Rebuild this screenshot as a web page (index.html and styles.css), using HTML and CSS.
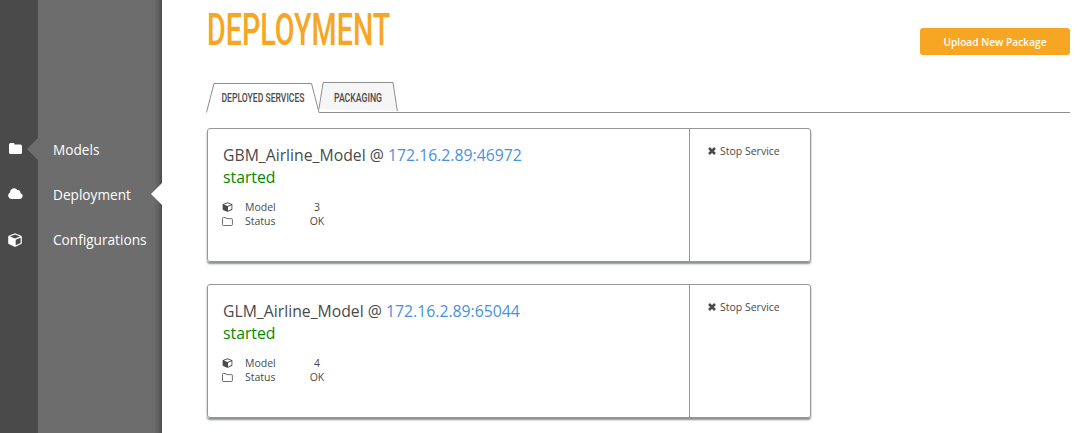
FILE: index.html
```html
<!DOCTYPE html>
<html lang="en">
<head>
<meta charset="utf-8">
<title>Deployment</title>
<link rel="stylesheet" href="styles.css">
</head>
<body>
<svg class="defs" width="0" height="0" aria-hidden="true">
  <symbol id="folder" viewBox="0 0 13 11"><path d="M0 1.6Q0 0 1.6 0H4Q5.6 0 5.6 1.4H11.2Q13 1.4 13 3V9.4Q13 11 11.4 11H1.6Q0 11 0 9.4Z"/></symbol>
  <symbol id="cloud" viewBox="0 0 15 11"><path d="M3.4 11A3.4 3.4 0 0 1 2 4.6A4.1 4.1 0 0 1 9.4 2A2.4 2.4 0 0 1 12.3 5A3.05 3.05 0 0 1 11.8 11Z"/></symbol>
  <symbol id="cube" viewBox="0 0 14 14"><path fill-rule="evenodd" d="M7 .3L13.2 2.7Q13.8 3 13.8 3.6V10.2Q13.8 10.8 13.2 11.1L7.5 13.7Q7 13.9 6.5 13.7L.8 11.1Q.2 10.8 .2 10.2V3.6Q.2 3 .8 2.7ZM7 1.6L2 3.6L7 5.6L12 3.6ZM7.7 6.7V12.2L12.6 9.9V4.7Z"/></symbol>
  <symbol id="folder-line" viewBox="0 0 11 9"><path fill="none" stroke="currentColor" stroke-width=".8" d="M.5 1.5Q.5.5 1.5.5H3.4Q4.3.5 4.4 1.6H9.3Q10.4 1.6 10.4 2.6V7.5Q10.4 8.5 9.4 8.5H1.5Q.5 8.5.5 7.5Z"/></symbol>
  <symbol id="cross" viewBox="0 0 8 8"><path fill="none" stroke="currentColor" stroke-width="2.5" d="M1 1L7 7M7 1L1 7"/></symbol>
</svg>
<div class="app">
  <nav class="sidebar">
    <a class="item parent"><span class="rail"><svg class="i-folder"><use href="#folder"/></svg></span><span class="label">Models</span></a>
    <a class="item active"><span class="rail"><svg class="i-cloud"><use href="#cloud"/></svg></span><span class="label">Deployment</span></a>
    <a class="item"><span class="rail"><svg class="i-cube"><use href="#cube"/></svg></span><span class="label">Configurations</span></a>
  </nav>
  <main class="main">
    <header class="header">
      <svg class="title" width="190" height="56"><text transform="translate(1 45) scale(.64 1)" textLength="286.5" lengthAdjust="spacingAndGlyphs">DEPLOYMENT</text></svg>
      <button class="upload">Upload New Package</button>
    </header>
    <svg class="tabs" width="864" height="34">
      <path class="tab-off" d="M112.8 29.5L117.2 2.5H187L191.3 31"/>
      <path class="rule" d="M113 32.5H864"/>
      <path class="tab-on" d="M.5 32.5L8 3.5H105.5L113 32.5"/>
      <text transform="translate(15.5 22) scale(.66 1)" textLength="125.8" lengthAdjust="spacingAndGlyphs">DEPLOYED SERVICES</text>
      <text transform="translate(128 22) scale(.68 1)" textLength="70.6" lengthAdjust="spacingAndGlyphs">PACKAGING</text>
    </svg>
    <section class="card">
      <div class="info">
        <div class="name">GBM_Airline_Model @ <a>172.16.2.89:46972</a></div>
        <div class="state">started</div>
        <div class="row"><svg class="i-small"><use href="#cube"/></svg><span>Model</span><b>3</b></div>
        <div class="row"><svg class="i-small i-line"><use href="#folder-line"/></svg><span>Status</span><b>OK</b></div>
      </div>
      <div class="actions"><svg class="i-cross"><use href="#cross"/></svg>Stop Service</div>
    </section>
    <section class="card">
      <div class="info">
        <div class="name">GLM_Airline_Model @ <a>172.16.2.89:65044</a></div>
        <div class="state">started</div>
        <div class="row"><svg class="i-small"><use href="#cube"/></svg><span>Model</span><b>4</b></div>
        <div class="row"><svg class="i-small i-line"><use href="#folder-line"/></svg><span>Status</span><b>OK</b></div>
      </div>
      <div class="actions"><svg class="i-cross"><use href="#cross"/></svg>Stop Service</div>
    </section>
  </main>
</div>
</body>
</html>
```
FILE: styles.css
```css
* { box-sizing: border-box; }
body { margin: 0; background: #fff; color: #4a4a4a; font-family: "Open Sans", sans-serif; overflow: hidden; }
svg { display: block; fill: currentColor; }
.defs { position: absolute; }
.app { display: flex; height: 433px; }
.sidebar {
  width: 162px; flex: none; padding-top: 127px; color: #fff;
  background:
    linear-gradient(to left, rgba(0,0,0,.3), rgba(0,0,0,.1) 4px, transparent 9px),
    linear-gradient(to right, #4a4a4a 38px, #6d6d6d 38px);
}
.item { position: relative; display: flex; align-items: center; height: 45px; font-size: 13.65px; }
.rail { width: 38px; padding-left: 8px; }
.label { padding-left: 15px; }
.parent .rail, .active .rail { padding-bottom: 2px; }
.parent::after, .active::after { content: ""; position: absolute; top: 11px; border: solid transparent; border-width: 11px 11px 11px 0; }
.parent::after { left: 27px; border-right-color: #6d6d6d; }
.active::after { right: 0; border-right-color: #fff; }
.i-folder { width: 13px; height: 11px; margin-left: 1px; }
.i-cloud { width: 15px; height: 11px; }
.i-cube { width: 14px; height: 14px; }
.main { width: 864px; margin-left: 44px; }
.header { display: flex; justify-content: space-between; height: 80px; }
.title { font: 500 44.5px Roboto, sans-serif; fill: #f6a623; overflow: visible; }
.upload {
  width: 150px; height: 27px; margin-top: 28px; padding: 2px 0 0; border: 0; border-radius: 3px;
  background: #f6a623; color: #fff; font: 600 10.2px/25px "Open Sans", sans-serif;
}
.tabs { font: 500 13px Roboto, sans-serif; }
.tab-on { fill: #fff; stroke: #8e8e8e; }
.tab-off { fill: #f6f6f6; stroke: #8e8e8e; }
.rule { stroke: #8e8e8e; }
.card {
  display: flex; width: 604px; height: 134px; margin: 14px 0 22px 1px;
  border: 1px solid #979797; border-radius: 3px; box-shadow: 0 2px 2px #8b8f8c;
}
.info { width: 482px; padding: 15px 0 0 15px; border-right: 1px solid #979797; }
.name, .state { font-size: 15.78px; line-height: 22px; }
.name a { color: #4a90e2; }
.state { color: #008a00; margin-bottom: 12px; }
.row { display: grid; grid-template-columns: 22px 54px 36px; align-items: center; height: 14px; font-size: 10.5px; line-height: 14px; }
.row b { font-weight: 400; text-align: center; }
.i-small { width: 11px; height: 10px; margin-left: -1px; }
.i-line { height: 9px; }
.actions { display: flex; align-items: center; gap: 4px; height: 14px; margin: 15px 0 0 18px; font-size: 10.5px; }
.i-cross { width: 8px; height: 8px; }
```
